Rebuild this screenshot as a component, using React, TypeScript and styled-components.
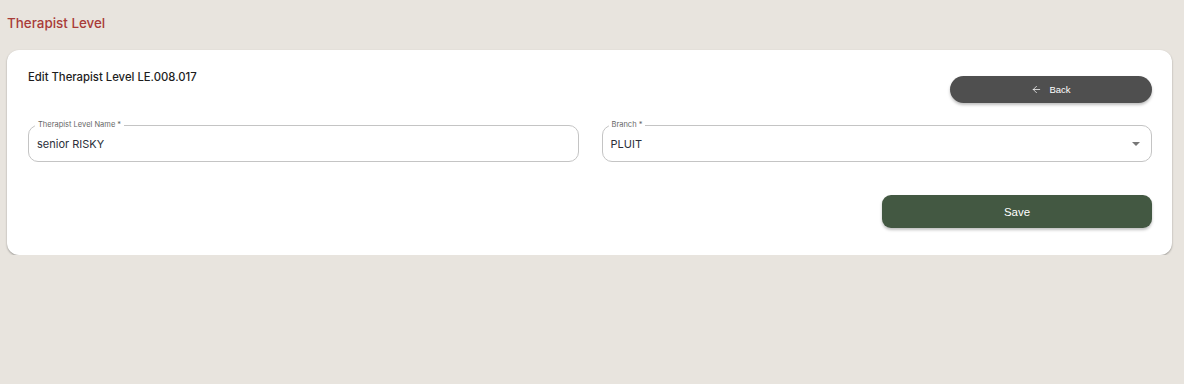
import React from "react";
import styled, { createGlobalStyle } from "styled-components";
import { ArrowLeft } from "lucide-react";

const GlobalStyle = createGlobalStyle`
  html, body {
    margin: 0;
    background: #e8e4de;
  }
  body {
    font-family: Inter, "Noto Sans", sans-serif;
  }
`;

const Page = styled.div`
  padding: 14px 12px 0 7px;
`;

const PageTitle = styled.h1`
  margin: 0 0 18px;
  font-size: 13.4px;
  line-height: 18px;
  font-weight: 500;
  color: #a93b38;
`;

const Card = styled.div`
  background: #fff;
  border-radius: 12px;
  box-shadow: 0 1px 2px rgba(0, 0, 0, 0.35);
  padding: 19px 20px 27px 21px;
`;

const Header = styled.div`
  display: flex;
  justify-content: space-between;
  align-items: flex-start;
`;

const Heading = styled.h2`
  margin: 0;
  font-size: 11.3px;
  line-height: 16px;
  font-weight: 500;
  color: #1d1d1d;
`;

const BackButton = styled.button`
  margin-top: 7px;
  width: 202px;
  height: 27px;
  border: none;
  border-radius: 14px;
  background: #4f4f4f;
  color: #fff;
  display: flex;
  align-items: center;
  justify-content: center;
  gap: 7px;
  font-family: "Liberation Sans", Arial, sans-serif;
  font-size: 9.5px;
  box-shadow: 0 2px 3px rgba(0, 0, 0, 0.25);
  cursor: pointer;
`;

const Fields = styled.div`
  display: grid;
  grid-template-columns: 1fr 1fr;
  gap: 23px;
  margin-top: 22px;
`;

const Field = styled.div`
  position: relative;
  height: 37px;
  border: 1px solid #c4c4c4;
  border-radius: 10px;
  box-sizing: border-box;
  display: flex;
  align-items: center;
  padding: 0 9px 0 8px;
`;

const Label = styled.span`
  position: absolute;
  top: -6px;
  left: 6px;
  padding: 0 3px;
  background: #fff;
  font-size: 7.5px;
  line-height: 10px;
  color: #666;
`;

const Value = styled.span`
  flex: 1;
  font-size: 11px;
  color: #2b2f3a;
  padding-top: 1px;
`;

const Caret = styled.span`
  width: 0;
  height: 0;
  border-left: 4px solid transparent;
  border-right: 4px solid transparent;
  border-top: 4px solid #777;
  margin-right: 2px;
`;

const Actions = styled.div`
  display: flex;
  justify-content: flex-end;
  margin-top: 33px;
`;

const SaveButton = styled.button`
  width: 270px;
  height: 33px;
  border: none;
  border-radius: 9px;
  background: #435842;
  color: #fff;
  font-family: "Liberation Sans", Arial, sans-serif;
  font-size: 11.5px;
  box-shadow: 0 2px 3px rgba(0, 0, 0, 0.25);
  cursor: pointer;
`;

export default function App() {
  return (
    <>
      <GlobalStyle />
      <Page>
        <PageTitle>Therapist Level</PageTitle>
        <Card>
          <Header>
            <Heading>Edit Therapist Level LE.008.017</Heading>
            <BackButton>
              <ArrowLeft size={11} strokeWidth={1.6} />
              Back
            </BackButton>
          </Header>
          <Fields>
            <Field>
              <Label>Therapist Level Name *</Label>
              <Value>senior RISKY</Value>
            </Field>
            <Field>
              <Label>Branch *</Label>
              <Value>PLUIT</Value>
              <Caret />
            </Field>
          </Fields>
          <Actions>
            <SaveButton>Save</SaveButton>
          </Actions>
        </Card>
      </Page>
    </>
  );
}
